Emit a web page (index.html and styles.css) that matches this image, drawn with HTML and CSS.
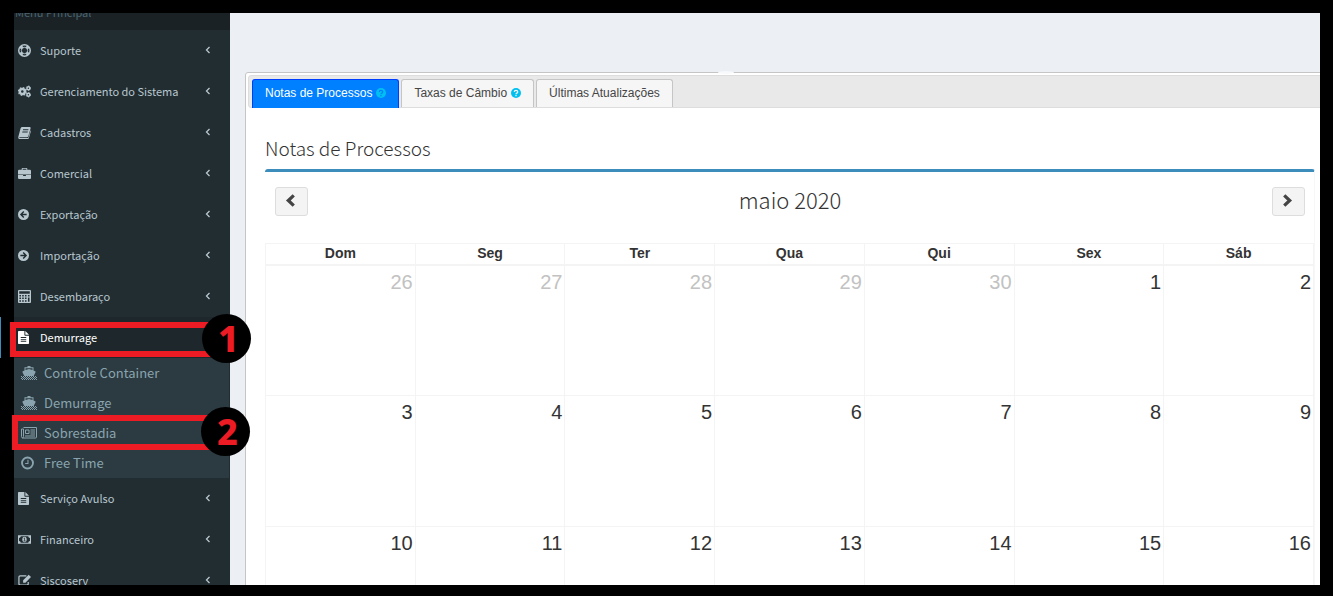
FILE: index.html
```
<!DOCTYPE html>
<html lang="pt-BR">
<head>
<meta charset="utf-8">
<title>Notas de Processos</title>
<link rel="stylesheet" href="styles.css">
</head>
<body>
<svg class="sprite" aria-hidden="true">
  <symbol id="ring" viewBox="0 0 14 14"><circle cx="7" cy="7" r="6.200" fill="none" stroke="currentColor" stroke-width="1.600"/><circle cx="7" cy="7" r="3.400" fill="none" stroke="currentColor" stroke-width="1"/><path d="M2.600 2.600l2.200 2.200M11.400 2.600l-2.200 2.200M2.600 11.400l2.200-2.200M11.400 11.400l-2.200-2.200" stroke="currentColor" stroke-width="3.400"/></symbol>
  <symbol id="cogs" viewBox="0 0 15 14"><circle cx="5" cy="7" r="2.900" fill="none" stroke="currentColor" stroke-width="2.800"/><circle cx="5" cy="7" r="4.400" fill="none" stroke="currentColor" stroke-width="1.600" stroke-dasharray="1.730"/><circle cx="12" cy="3.200" r="1.700" fill="none" stroke="currentColor" stroke-width="1.700"/><circle cx="12" cy="3.200" r="2.600" fill="none" stroke="currentColor" stroke-width="1" stroke-dasharray="1.360"/><circle cx="12" cy="10.800" r="1.700" fill="none" stroke="currentColor" stroke-width="1.700"/><circle cx="12" cy="10.800" r="2.600" fill="none" stroke="currentColor" stroke-width="1" stroke-dasharray="1.360"/></symbol>
  <symbol id="book" viewBox="0 0 14 14"><path fill="currentColor" fill-rule="evenodd" d="M4.500 1h8q1.500.2 1 1.700l-2.300 8q-.4 1.300-1.700 1.300H2q-.8.100-.6.600.2.400.9.400h7.800q.9 0 1.200-.9l2.300-7.600q.5.500.300 1.200l-2.200 7.300q-.4 1.300-1.700 1.300H2Q0 13.800.3 11.800L2.800 2.500Q3.300 1 4.500 1zM5.500 3.500l-.3 1h5.800l.3-1zM4.800 6l-.3 1h5.800l.3-1z"/></symbol>
  <symbol id="briefcase" viewBox="0 0 14 14"><path fill="currentColor" fill-rule="evenodd" d="M4 3V1.800Q4 1 4.800 1h4.400q.8 0 .8.800V3h2.800Q14 3 14 4.200V8H0V4.200Q0 3 1.200 3zM5 3h4V2H5zM0 8.700h5.500v1h3v-1H14v3.100q0 1.200-1.200 1.200H1.200Q0 13 0 11.800z"/></symbol>
  <symbol id="left" viewBox="0 0 14 14"><circle cx="7" cy="7" r="7" fill="currentColor"/><path d="M7.400 3.300L3.700 7l3.700 3.700M4 7h7" fill="none" stroke="#222d32" stroke-width="1.800"/></symbol>
  <symbol id="right" viewBox="0 0 14 14"><circle cx="7" cy="7" r="7" fill="currentColor"/><path d="M6.600 3.300L10.300 7l-3.700 3.700M10 7H3" fill="none" stroke="#222d32" stroke-width="1.800"/></symbol>
  <symbol id="calc" viewBox="0 0 14 14"><path fill="currentColor" fill-rule="evenodd" d="M1 0h12q1 0 1 1v12q0 1-1 1H1q-1 0-1-1V1q0-1 1-1zM1.300 1.300v2.700h11.400V1.300zM1.500 5.500V7h1.700V5.500zm3 0V7h1.700V5.500zm3 0V7h1.700V5.500zm3.200 0V7h1.700V5.500zM1.500 8.200v1.600h1.700V8.200zm3 0v1.600h1.700V8.200zm3 0v1.600h1.700V8.200zM1.500 11v1.600h1.700V11zm3 0v1.600h1.700V11zm3 0v1.600h1.700V11zm3.200-2.800v4.400h1.700V8.200z"/></symbol>
  <symbol id="file" viewBox="0 0 12 14"><path fill="currentColor" fill-rule="evenodd" d="M.8 0H7v4.200q0 .8.800.8H12v8.200q0 .8-.8.800H.8Q0 14 0 13.200V.8Q0 0 .8 0zM8 0l4 4H8zM3 6.500v1h6v-1zm0 2v1h6v-1zm0 2v1h6v-1z"/></symbol>
  <symbol id="ship" viewBox="0 0 16 14"><path fill="currentColor" fill-rule="evenodd" d="M6.500 0h3v1.200H12.500v3.300l1.700.8q.7.400.3 1L12.700 10H3.300L1.500 6.300q-.4-.6.300-1l1.700-.8V1.200h3zM4.500 2.300v1.800L8 2.900l3.500 1.200V2.300z"/><path d="M0 10.500h16M0 12.500h16" stroke="currentColor" stroke-width="1" stroke-dasharray="1"/><path d="M0 11.500h16M0 13.500h16" stroke="currentColor" stroke-width="1" stroke-dasharray="1" stroke-dashoffset="1"/></symbol>
  <symbol id="news" viewBox="0 0 16 12"><path fill="none" stroke="currentColor" d="M2.500.5h13v9.500q0 1-1 1H2Q.5 11 .5 9.500V2h2v7.500q0 1.500-1 1.500"/><path fill="none" stroke="currentColor" d="M4.500 3h3.500v3.500H4.500zM9.500 3H14M9.500 5H14M9.500 7H14M4 9h10"/></symbol>
  <symbol id="clock" viewBox="0 0 14 14"><circle cx="7" cy="7" r="5.900" fill="none" stroke="currentColor" stroke-width="2"/><path d="M7.500 3.500V7.500H4.500" fill="none" stroke="currentColor" stroke-width="1.100"/></symbol>
  <symbol id="money" viewBox="0 0 15 10"><path fill="currentColor" fill-rule="evenodd" d="M0 0h15v10H0zM3.200 1.200Q3 3 1.200 3.200v3.600Q3 7 3.200 8.800h8.600Q12 7 13.800 6.800V3.200Q12 3 11.800 1.200z"/><ellipse cx="7.500" cy="5" rx="2.500" ry="3.200" fill="currentColor"/><path d="M6.600 3.800l1-.6v3.300M6.400 6.700h2.400" stroke="#222d32" fill="none" stroke-width=".9"/></symbol>
  <symbol id="edit" viewBox="0 0 14 14"><path d="M9 2H2.500Q1 2 1 3.500v7Q1 12 2.500 12h7q1.500 0 1.500-1.500V8.500" fill="none" stroke="currentColor" stroke-width="1.300"/><path d="M11.500.8L14 3.300 8 9.300H5.500V6.800z" fill="currentColor"/></symbol>
  <symbol id="angle" viewBox="0 0 6 8"><path d="M4.500 1L1.500 4l3 3" fill="none" stroke="currentColor" stroke-width="1.300"/></symbol>
  <symbol id="prev" viewBox="0 0 10 12"><path d="M8 1.300L3 6l5 4.700" fill="none" stroke="currentColor" stroke-width="3"/></symbol>
  <symbol id="next" viewBox="0 0 10 12"><path d="M2 1.300L7 6l-5 4.700" fill="none" stroke="currentColor" stroke-width="3"/></symbol>
  <symbol id="help" viewBox="0 0 10 10"><circle cx="5" cy="5" r="5" fill="#00c0ef"/><path d="M3.300 4Q3.400 2.400 5 2.400T6.700 3.900Q6.700 4.600 5.800 5.100 5 5.500 5 6.200M5 7v1.300" fill="none" stroke="var(--mark)" stroke-width="1.300"/></symbol>
</svg>
<div class="app">
  <nav class="sidebar">
    <div class="menu-header"><span>Menu Principal</span></div>
    <ul class="menu">
      <li><a href="#"><svg class="icon"><use href="#ring"/></svg><span>Suporte</span><svg class="angle"><use href="#angle"/></svg></a></li>
      <li><a href="#"><svg class="icon"><use href="#cogs"/></svg><span>Gerenciamento do Sistema</span><svg class="angle"><use href="#angle"/></svg></a></li>
      <li><a href="#"><svg class="icon"><use href="#book"/></svg><span>Cadastros</span><svg class="angle"><use href="#angle"/></svg></a></li>
      <li><a href="#"><svg class="icon"><use href="#briefcase"/></svg><span>Comercial</span><svg class="angle"><use href="#angle"/></svg></a></li>
      <li><a href="#"><svg class="icon narrow"><use href="#left"/></svg><span>Exportação</span><svg class="angle"><use href="#angle"/></svg></a></li>
      <li><a href="#"><svg class="icon narrow"><use href="#right"/></svg><span>Importação</span><svg class="angle"><use href="#angle"/></svg></a></li>
      <li><a href="#"><svg class="icon"><use href="#calc"/></svg><span>Desembaraço</span><svg class="angle"><use href="#angle"/></svg></a></li>
      <li class="active">
        <a href="#"><svg class="icon narrow"><use href="#file"/></svg><span>Demurrage</span></a>
        <div class="callout first"><b>1</b></div>
        <ul class="submenu">
          <li><a href="#"><svg class="icon"><use href="#ship"/></svg><span>Controle Container</span></a></li>
          <li><a href="#"><svg class="icon"><use href="#ship"/></svg><span>Demurrage</span></a></li>
          <li><a href="#"><svg class="icon"><use href="#news"/></svg><span>Sobrestadia</span></a><div class="callout second"><b>2</b></div></li>
          <li><a href="#"><svg class="icon small"><use href="#clock"/></svg><span>Free Time</span></a></li>
        </ul>
      </li>
      <li><a href="#"><svg class="icon narrow"><use href="#file"/></svg><span>Serviço Avulso</span><svg class="angle"><use href="#angle"/></svg></a></li>
      <li><a href="#"><svg class="icon"><use href="#money"/></svg><span>Financeiro</span><svg class="angle"><use href="#angle"/></svg></a></li>
      <li><a href="#"><svg class="icon"><use href="#edit"/></svg><span>Siscoserv</span><svg class="angle"><use href="#angle"/></svg></a></li>
    </ul>
  </nav>
  <main class="content">
    <section class="tabs">
      <div class="tab-bar" role="tablist">
        <button class="tab selected" role="tab" aria-selected="true">Notas de Processos <svg class="help"><use href="#help"/></svg></button>
        <button class="tab" role="tab" aria-selected="false">Taxas de Câmbio <svg class="help"><use href="#help"/></svg></button>
        <button class="tab" role="tab" aria-selected="false">Últimas Atualizações</button>
      </div>
      <div class="panel">
        <h1>Notas de Processos</h1>
        <div class="box">
          <div class="toolbar">
            <button class="nav" aria-label="Anterior"><svg><use href="#prev"/></svg></button>
            <h2>maio 2020</h2>
            <button class="nav" aria-label="Próximo"><svg><use href="#next"/></svg></button>
          </div>
          <table class="calendar">
            <thead><tr><th>Dom</th><th>Seg</th><th>Ter</th><th>Qua</th><th>Qui</th><th>Sex</th><th>Sáb</th></tr></thead>
            <tbody>
              <tr><td class="other">26</td><td class="other">27</td><td class="other">28</td><td class="other">29</td><td class="other">30</td><td>1</td><td>2</td></tr>
              <tr><td>3</td><td>4</td><td>5</td><td>6</td><td>7</td><td>8</td><td>9</td></tr>
              <tr><td>10</td><td>11</td><td>12</td><td>13</td><td>14</td><td>15</td><td>16</td></tr>
            </tbody>
          </table>
        </div>
      </div>
    </section>
  </main>
</div>
</body>
</html>
```
FILE: styles.css
```
* { box-sizing: border-box; }
body {
  margin: 0;
  height: 100vh;
  padding: 13px 13px 11px 14px;
  background: #000;
  overflow: hidden;
  font-family: "Liberation Sans", Arial, sans-serif;
  color: #333;
}
.sprite { position: absolute; width: 0; height: 0; }
ul { list-style: none; margin: 0; padding: 0; }
a { color: inherit; text-decoration: none; }

.app { display: flex; height: 100%; overflow-x: visible; overflow-y: clip; }

.sidebar {
  position: relative;
  z-index: 1;
  flex: 0 0 216px;
  background: #222d32;
  color: #b8c7ce;
  font: 11px/18px "Noto Sans CJK JP", "Open Sans", sans-serif;
}
.menu-header {
  display: flex;
  align-items: flex-end;
  height: 17px;
  padding: 0 0 9px 1px;
  overflow: hidden;
  background: #1a2226;
  color: #4b646f;
}
.menu > li { position: relative; }
.menu > li > a { display: flex; align-items: center; height: 41px; padding: 0 19px 0 4px; }
.menu > li > a span { flex: 1; padding-bottom: 2px; }
.icon { width: 13px; height: 13px; margin-right: 9px; }
.icon.narrow { width: 11px; margin-right: 11px; }
.angle { width: 6px; height: 8px; margin-bottom: 2px; }
.menu > .active > a { background: #1e282c; color: #fff; }
.menu > .active::before {
  content: "";
  position: absolute;
  left: -14px;
  top: 0;
  width: 1px;
  height: 41px;
  background: #3c8dbc;
}
.submenu { margin-right: 1px; background: #2c3b41; color: #8aa4af; font-size: 13px; }
.submenu li { position: relative; }
.submenu a { display: flex; align-items: center; height: 30px; padding-left: 7px; }
.submenu .icon { width: 16px; height: 14px; margin-right: 7px; }
.submenu .icon.small { width: 13px; margin-right: 10px; }

.callout { position: absolute; z-index: 2; height: 35px; border: 6px solid #ed1c24; border-right: 0; pointer-events: none; }
.callout.first { left: -4px; top: 5px; width: 220px; }
.callout.second { left: -2px; top: -3px; width: 217px; }
.callout b {
  position: absolute;
  right: -21px;
  top: -14px;
  width: 49px;
  height: 49px;
  padding-left: 4px;
  border-radius: 50%;
  background: #000;
  color: #ed1c24;
  font: 800 36px/49px "Noto Sans", "Open Sans", sans-serif;
  text-align: center;
}

.content { flex: 1; min-width: 0; overflow: hidden; padding: 59px 0 0 15px; background: #ecf0f5; }
.tabs {
  position: relative;
  margin-right: -12px;
  padding: 2px;
  border: 1px solid #c5c5c5;
  border-radius: 3px;
  background: #fff;
}
.tabs::before {
  content: "";
  position: absolute;
  left: 472px;
  top: -2px;
  width: 16px;
  height: 3px;
  border-radius: 50%;
  background: #f7f9fb;
}
.tab-bar {
  display: flex;
  align-items: flex-end;
  gap: 2px;
  height: 33px;
  padding-left: 3px;
  border: 1px solid #ddd;
  border-radius: 3px;
  background: #e9e9e9;
}
.tab {
  --mark: #f6f6f6;
  display: flex;
  align-items: center;
  gap: 4px;
  height: 28px;
  padding: 0 12px 2px;
  border: 1px solid #c5c5c5;
  border-bottom: 0;
  border-radius: 3px 3px 0 0;
  background: #f6f6f6;
  color: #454545;
  font: 12px "Liberation Sans", Arial, sans-serif;
}
.tab.selected { --mark: #007fff; height: 29px; margin-bottom: -1px; border-color: #003eff; background: #007fff; color: #fff; }
.help { width: 10px; height: 10px; }

.panel { padding: 27px 14px 0 17px; }
h1, h2 { margin: 0; font-family: "Noto Sans CJK JP", Lato, sans-serif; font-weight: 300; }
h1 { font-size: 19px; line-height: 26px; }
.box { margin-top: 8px; border: 1px solid #f7f7f7; border-top: 3px solid #3c8dbc; border-radius: 3px; border-left: 0; }
.toolbar { display: flex; align-items: flex-start; justify-content: space-between; height: 71px; padding: 15px 9px 0 10px; }
h2 { font-size: 22px; line-height: 24px; }
.nav {
  display: grid;
  place-items: center;
  width: 33px;
  height: 29px;
  padding: 0 2px 2px 0;
  border: 1px solid #ddd;
  border-radius: 3px;
  background: #f4f4f4;
  color: #444;
}
.nav svg { width: 11px; height: 13px; }
.calendar { width: 100%; table-layout: fixed; border-collapse: collapse; }
.calendar th, .calendar td { border: 1px solid #f4f4f4; }
.calendar th { height: 21px; padding: 0; border-bottom-width: 2px; font-size: 14px; line-height: 19px; }
.calendar td { height: 131px; padding: 4px 2px; vertical-align: top; text-align: right; font-size: 20px; line-height: 24px; }
.calendar .other { color: #c2c2c2; }
```
